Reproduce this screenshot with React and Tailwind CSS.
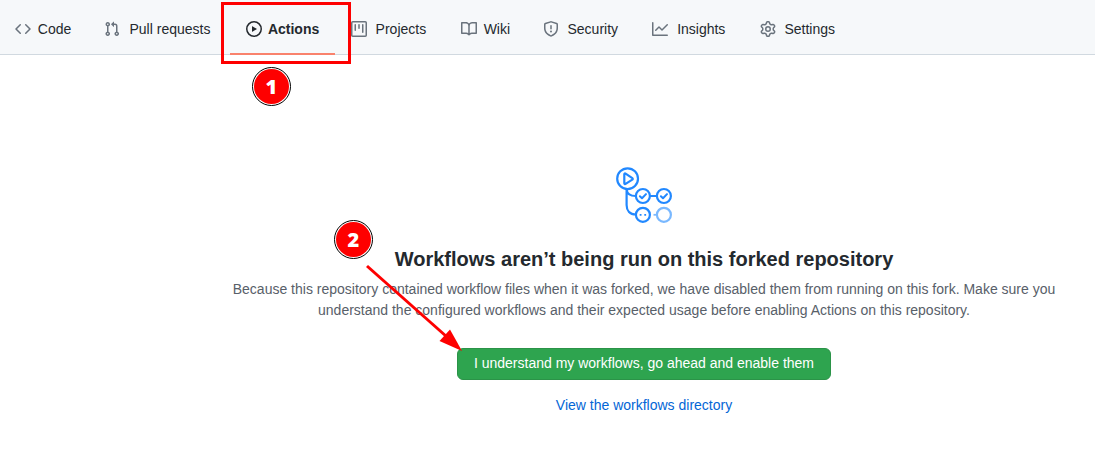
import React from "react";

function Octicon({ children }) {
  return (
    <svg viewBox="0 0 16 16" className="size-4 shrink-0" fill="currentColor" fillRule="evenodd" aria-hidden="true">
      {children}
    </svg>
  );
}

const icons = {
  code: (
    <path d="M4.72 3.22a.75.75 0 011.06 1.06L2.06 8l3.72 3.72a.75.75 0 11-1.06 1.06L.47 8.53a.75.75 0 010-1.06l4.25-4.25zm6.56 0a.75.75 0 10-1.06 1.06L13.94 8l-3.72 3.72a.75.75 0 101.06 1.06l4.25-4.25a.75.75 0 000-1.06l-4.25-4.25z" />
  ),
  pull: (
    <path d="M7.177 3.073L9.573.677A.25.25 0 0110 .854v4.792a.25.25 0 01-.427.177L7.177 3.427a.25.25 0 010-.354zM3.75 2.5a.75.75 0 100 1.5.75.75 0 000-1.5zm-2.25.75a2.25 2.25 0 113 2.122v5.256a2.251 2.251 0 11-1.5 0V5.372A2.25 2.25 0 011.5 3.25zM11 2.5h-1V4h1a1 1 0 011 1v5.628a2.251 2.251 0 101.5 0V5A2.5 2.5 0 0011 2.5zm1 10.25a.75.75 0 111.5 0 .75.75 0 01-1.5 0zM3.75 12a.75.75 0 100 1.5.75.75 0 000-1.5z" />
  ),
  play: (
    <path d="M1.5 8a6.5 6.5 0 1113 0 6.5 6.5 0 01-13 0zM8 0a8 8 0 100 16A8 8 0 008 0zM6.379 5.227A.25.25 0 006 5.442v5.117a.25.25 0 00.379.214l4.264-2.559a.25.25 0 000-.428L6.379 5.227z" />
  ),
  project: (
    <path d="M1.75 0A1.75 1.75 0 000 1.75v12.5C0 15.216.784 16 1.75 16h12.5A1.75 1.75 0 0016 14.25V1.75A1.75 1.75 0 0014.25 0H1.75zM1.5 1.75a.25.25 0 01.25-.25h12.5a.25.25 0 01.25.25v12.5a.25.25 0 01-.25.25H1.75a.25.25 0 01-.25-.25V1.75zM11.75 3a.75.75 0 00-.75.75v7.5a.75.75 0 001.5 0v-7.5a.75.75 0 00-.75-.75zm-8.25.75a.75.75 0 011.5 0v5.5a.75.75 0 01-1.5 0v-5.5zM8 3a.75.75 0 00-.75.75v3.5a.75.75 0 001.5 0v-3.5A.75.75 0 008 3z" />
  ),
  book: (
    <path d="M0 1.75A.75.75 0 01.75 1h4.253c1.227 0 2.317.59 3 1.501A3.744 3.744 0 0111.006 1h4.245a.75.75 0 01.75.75v10.5a.75.75 0 01-.75.75h-4.507a2.25 2.25 0 00-1.591.659l-.622.621a.75.75 0 01-1.06 0l-.622-.621A2.25 2.25 0 005.258 13H.75a.75.75 0 01-.75-.75V1.75zm8.755 3a2.25 2.25 0 012.25-2.25H14.5v9h-3.757c-.71 0-1.4.201-1.992.572l.004-7.322zm-1.504 7.324l.004-5.073-.002-2.253A2.25 2.25 0 005.003 2.5H1.5v9h3.757a3.75 3.75 0 011.994.574z" />
  ),
  shield: (
    <path d="M7.467.133a1.75 1.75 0 011.066 0l5.25 1.68A1.75 1.75 0 0115 3.48V7c0 1.566-.32 3.182-1.303 4.682-.983 1.498-2.585 2.813-5.032 3.855a1.7 1.7 0 01-1.33 0c-2.447-1.042-4.049-2.357-5.032-3.855C1.32 10.182 1 8.566 1 7V3.48a1.75 1.75 0 011.217-1.667l5.25-1.68zm.61 1.429a.25.25 0 00-.153 0l-5.25 1.68a.25.25 0 00-.174.238V7c0 1.358.275 2.666 1.057 3.86.784 1.194 2.121 2.34 4.366 3.297a.2.2 0 00.154 0c2.245-.956 3.582-2.104 4.366-3.298C13.225 9.666 13.5 8.36 13.5 7V3.48a.25.25 0 00-.174-.237l-5.25-1.68zM9 10.5a1 1 0 11-2 0 1 1 0 012 0zm-.25-5.75a.75.75 0 10-1.5 0v3a.75.75 0 001.5 0v-3z" />
  ),
  graph: (
    <path d="M1.5 1.75a.75.75 0 00-1.5 0v12.5c0 .414.336.75.75.75h14.5a.75.75 0 000-1.5H1.5V1.75zm14.28 2.53a.75.75 0 00-1.06-1.06L10 7.94 7.53 5.47a.75.75 0 00-1.06 0L3.22 8.72a.75.75 0 001.06 1.06L7 7.06l2.47 2.47a.75.75 0 001.06 0l5.25-5.25z" />
  ),
  gear: (
    <path d="M7.429 1.525a6.593 6.593 0 011.142 0c.036.003.108.036.137.146l.289 1.105c.147.56.55.967.997 1.189.174.086.341.183.501.29.417.278.97.423 1.53.27l1.102-.303c.11-.03.175.016.195.046.219.31.41.641.573.989.014.031.022.11-.059.19l-.815.806c-.411.406-.562.957-.53 1.456a4.588 4.588 0 010 .582c-.032.499.119 1.05.53 1.456l.815.806c.08.08.073.159.059.19a6.494 6.494 0 01-.573.99c-.02.029-.086.074-.195.045l-1.103-.303c-.559-.153-1.112-.008-1.529.27-.16.107-.327.204-.5.29-.449.222-.851.628-.998 1.189l-.289 1.105c-.029.11-.101.143-.137.146a6.613 6.613 0 01-1.142 0c-.036-.003-.108-.037-.137-.146l-.289-1.105c-.147-.56-.55-.967-.997-1.189a4.502 4.502 0 01-.501-.29c-.417-.278-.97-.423-1.53-.27l-1.102.303c-.11.03-.175-.016-.195-.046a6.492 6.492 0 01-.573-.989c-.014-.031-.022-.11.059-.19l.815-.806c.411-.406.562-.957.53-1.456a4.587 4.587 0 010-.582c.032-.499-.119-1.05-.53-1.456l-.815-.806c-.08-.08-.073-.159-.059-.19a6.44 6.44 0 01.573-.99c.02-.029.086-.075.195-.045l1.103.303c.559.153 1.112.008 1.529-.27.16-.107.327-.204.5-.29.449-.222.851-.628.998-1.189l.289-1.105c.029-.11.101-.143.137-.146zM8 0c-.236 0-.47.01-.701.03-.743.065-1.29.615-1.458 1.261l-.29 1.106c-.017.066-.078.158-.211.224a5.994 5.994 0 00-.668.386c-.123.082-.233.09-.3.071L3.27 2.776c-.644-.177-1.392.02-1.82.63a7.977 7.977 0 00-.704 1.217c-.315.675-.111 1.422.363 1.891l.815.806c.05.048.098.147.088.294a6.084 6.084 0 000 .772c.01.147-.038.246-.088.294l-.815.806c-.474.469-.678 1.216-.363 1.891.2.428.436.835.704 1.218.428.609 1.176.806 1.82.63l1.103-.303c.066-.019.176-.011.299.071.213.143.436.272.668.386.133.066.194.158.212.224l.289 1.106c.169.646.715 1.196 1.458 1.26a8.094 8.094 0 001.402 0c.743-.064 1.29-.614 1.458-1.26l.29-1.106c.017-.066.078-.158.211-.224a5.98 5.98 0 00.668-.386c.123-.082.233-.09.3-.071l1.102.302c.644.177 1.392-.02 1.82-.63.268-.382.505-.789.704-1.217.315-.675.111-1.422-.364-1.891l-.814-.806c-.05-.048-.098-.147-.088-.294a6.1 6.1 0 000-.772c-.01-.147.039-.246.088-.294l.814-.806c.475-.469.679-1.216.364-1.891a7.992 7.992 0 00-.704-1.218c-.428-.609-1.176-.806-1.82-.63l-1.103.303c-.066.019-.176.011-.299-.071a5.991 5.991 0 00-.668-.386c-.133-.066-.194-.158-.212-.224L10.16 1.29C9.99.645 9.444.095 8.701.031A8.094 8.094 0 008 0zm1.5 8a1.5 1.5 0 11-3 0 1.5 1.5 0 013 0zM11 8a3 3 0 11-6 0 3 3 0 016 0z" />
  ),
};

const tabs = [
  { label: "Code", icon: "code" },
  { label: "Pull requests", icon: "pull" },
  { label: "Actions", icon: "play", selected: true },
  { label: "Projects", icon: "project" },
  { label: "Wiki", icon: "book" },
  { label: "Security", icon: "shield" },
  { label: "Insights", icon: "graph" },
  { label: "Settings", icon: "gear" },
];

function StepBadge({ children }) {
  return (
    <span className="flex size-[39px] items-center justify-center rounded-full border border-black bg-white p-px">
      <span className="flex size-full items-center justify-center rounded-full bg-[#fe0000] font-['Noto_Sans','Open_Sans',sans-serif] text-xl leading-none font-black text-white">
        {children}
      </span>
    </span>
  );
}

// The label reserves the width of its bold form so that tabs keep their place when selected.
function Tab({ label, icon, selected }) {
  return (
    <li className="relative flex">
      <a
        href={"#" + icon}
        aria-current={selected ? "page" : undefined}
        className={
          "flex items-center gap-1.5 border-b-2 px-4 pt-1 " +
          (selected ? "border-[#f9826c] text-[#24292e]" : "border-transparent text-[#6a737d]")
        }
      >
        <Octicon>{icons[icon]}</Octicon>
        <span
          data-content={label}
          className={
            "text-center whitespace-nowrap text-[#24292e] before:invisible before:block before:h-0 before:font-bold before:content-[attr(data-content)] " +
            (selected ? "font-bold" : "")
          }
        >
          {label}
        </span>
      </a>
      {selected && (
        <>
          <span className="pointer-events-none absolute top-0.5 -right-4 h-[62px] -left-[9px] border-3 border-[#fe0000]" />
          <span className="absolute top-[67px] left-[22px]">
            <StepBadge>1</StepBadge>
          </span>
        </>
      )}
    </li>
  );
}

function WorkflowArt() {
  return (
    <svg viewBox="0 0 56 56" className="size-14" fill="none" stroke="#2188ff" strokeWidth="2.2" aria-hidden="true">
      <circle cx="11.6" cy="11.7" r="10.4" />
      <path d="M8.3 7.3v8.9c0 .8.7 1.1 1.3.7l6.7-4.3c.6-.4.6-1 0-1.4L9.6 6.6c-.6-.4-1.3-.1-1.3.7z" strokeLinejoin="round" />
      <path d="M10.6 22.2V38c0 5.800 3.400 9.500 9.200 9.500M10.600 22.200c.3 4.500 3.300 6.800 9.200 6.800M34 29h7" />
      <circle cx="26.9" cy="29" r="7" />
      <circle cx="47.9" cy="29" r="7" />
      <path d="M23.9 29.2l2.1 2.1 4-4.2M44.9 29.2l2.1 2.1 4-4.2" strokeLinecap="round" strokeLinejoin="round" strokeWidth="2" />
      <circle cx="26.9" cy="47.8" r="7" />
      <path d="M23.7 47.8h1.8M28.3 47.8h1.8" strokeWidth="1.8" />
      <g stroke="#79b8ff">
        <circle cx="47.9" cy="47.8" r="7" />
        <path d="M37.5 47.8h3.5" strokeWidth="1.8" />
      </g>
    </svg>
  );
}

export default function App() {
  return (
    <div className="min-h-screen overflow-x-hidden bg-white font-['Liberation_Sans',Arial,sans-serif] text-sm text-[#24292e]">
      <nav aria-label="Repository" className="h-[55px] border-b border-[#d1d9e0] bg-[#f6f8fa]">
        <ul className="-ml-px flex h-[55px]">
          {tabs.map((tab) => (
            <Tab key={tab.label} {...tab} />
          ))}
        </ul>
      </nav>

      <main className="flex flex-col items-center pt-28 pb-12 pl-[193px] text-center">
        <WorkflowArt />
        <h1 className="mt-5 text-xl leading-8 font-bold">Workflows aren’t being run on this forked repository</h1>
        <p className="mt-1 max-w-[840px] leading-[21px] text-[#586069]">
          Because this repository contained workflow files when it was forked, we have disabled them from running on this
          fork. Make sure you understand the configured workflows and their expected usage before enabling Actions on
          this repository.
        </p>
        <div className="relative mt-[27px]">
          <button
            type="button"
            className="h-8 rounded-md border border-[#2b9348] bg-[#2ea44f] px-4 pb-0.5 whitespace-nowrap text-white"
          >
            I understand my workflows, go ahead and enable them
          </button>
          <span className="absolute -top-32 -left-[123px]">
            <StepBadge>2</StepBadge>
          </span>
          <svg
            viewBox="0 0 100 90"
            className="pointer-events-none absolute -top-[84px] -left-[92px] h-[90px] w-[100px]"
            aria-hidden="true"
          >
            <path d="M2 2L82 73" stroke="#fe0000" strokeWidth="3" />
            <path d="M97 87L74.5 77L85 65.5Z" fill="#fe0000" />
          </svg>
        </div>
        <a href="#workflows" className="mt-[15px] leading-[21px] text-[#0366d6]">
          View the workflows directory
        </a>
      </main>
    </div>
  );
}
